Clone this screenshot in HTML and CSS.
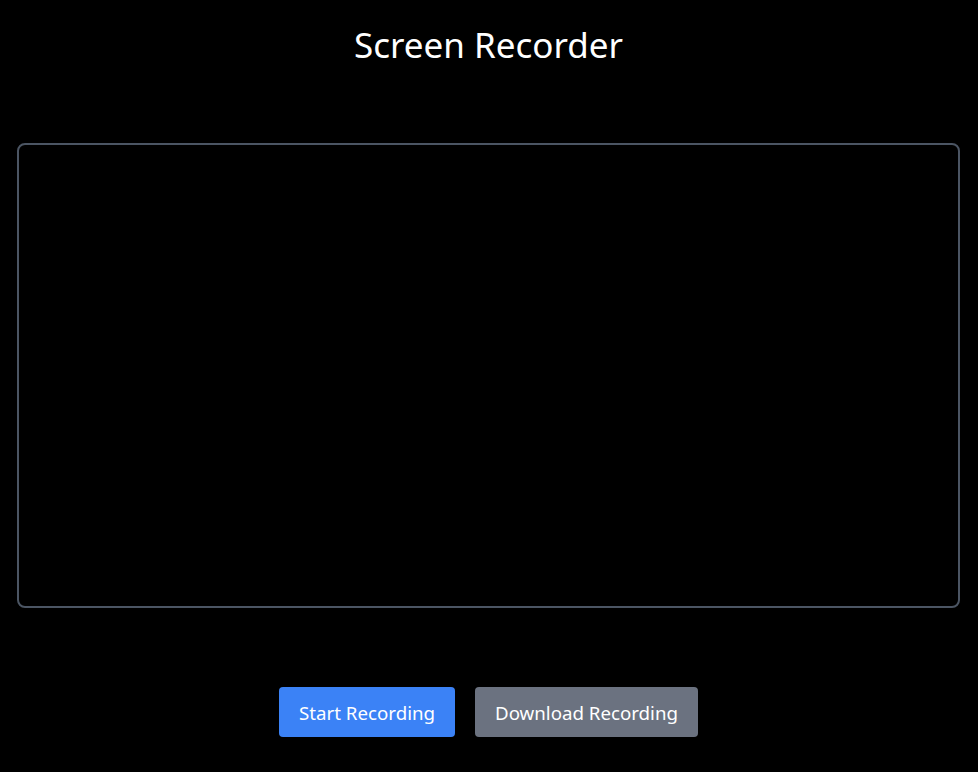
FILE: index.html
```html
<!DOCTYPE html>
<html>
<head>
<meta charset="utf-8">
<link rel="stylesheet" href="styles.css">
</head>
<body>
<div class="app">
  <h1 class="title">Screen Recorder</h1>
  <div class="preview"></div>
  <div class="actions">
    <button class="btn btn-start">Start Recording</button>
    <button class="btn btn-download">Download Recording</button>
  </div>
</div>
</body>
</html>
```
FILE: styles.css
```css
html, body {
  margin: 0;
  padding: 0;
  background: #000;
}
body {
  font-family: "Noto Sans", "Open Sans", sans-serif;
  color: #fff;
}
.app {
  display: flex;
  flex-direction: column;
  align-items: center;
  padding: 0 18px 0 17px;
}
.title {
  margin: 0;
  padding-top: 22px;
  font-size: 35px;
  font-weight: 400;
  line-height: 46px;
  height: 46px;
}
.preview {
  margin-top: 75px;
  width: 100%;
  box-sizing: border-box;
  height: 465px;
  border: 2px solid #4b5563;
  border-radius: 8px;
}
.actions {
  margin-top: 79px;
  display: flex;
  gap: 20px;
}
.btn {
  font-family: inherit;
  font-size: 18.7px;
  color: #fff;
  border: none;
  border-radius: 4px;
  height: 50px;
  padding: 0 20px;
}
.btn-start {
  background: #3b82f6;
}
.btn-download {
  background: #6b7280;
}
```
